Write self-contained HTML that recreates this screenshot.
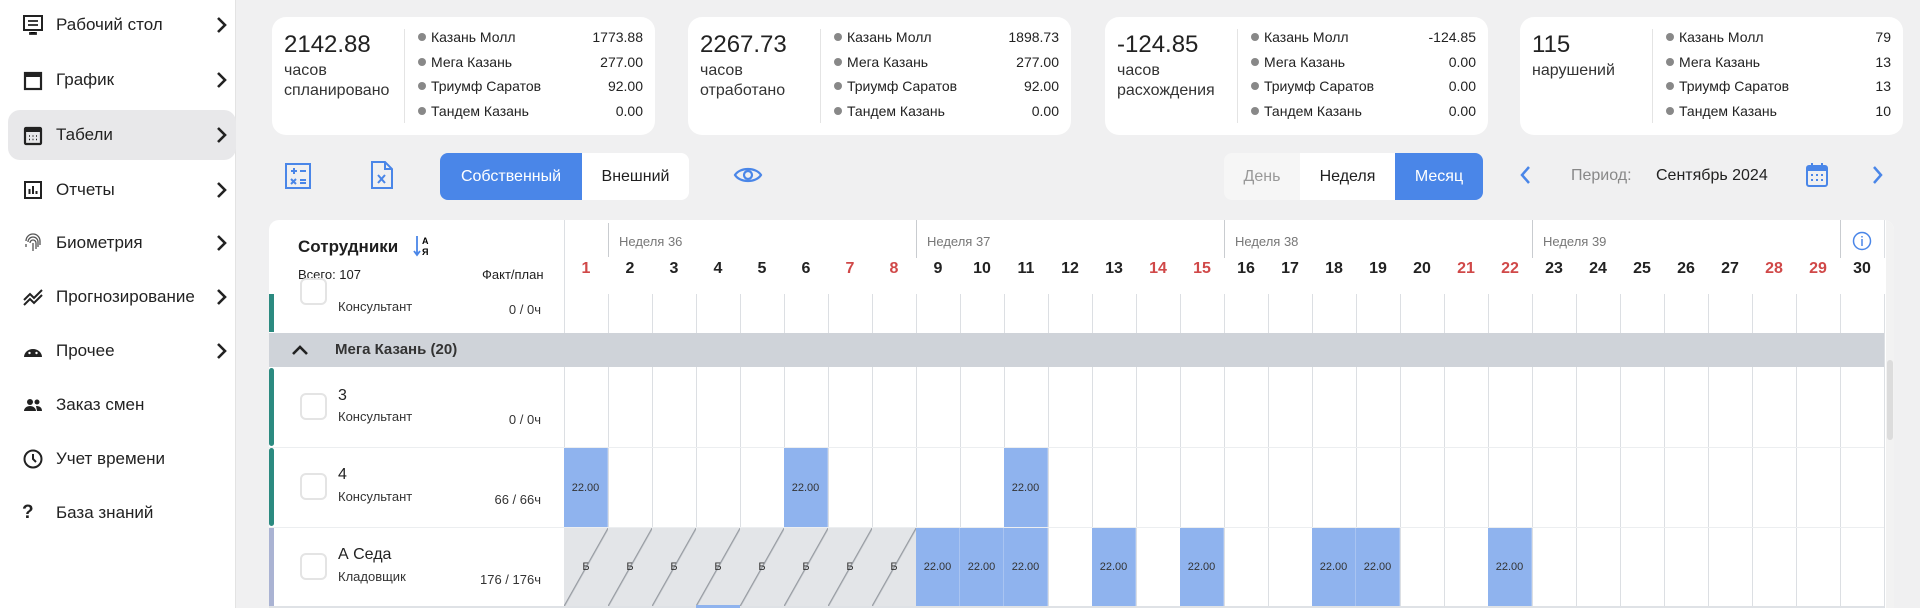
<!DOCTYPE html>
<html><head><meta charset="utf-8"><style>
*{box-sizing:border-box;margin:0;padding:0}
body{width:1920px;height:608px;overflow:hidden;background:#f0f0f1;font-family:"Liberation Sans",sans-serif;color:#1f1f1f;position:relative}
.a{position:absolute}
#side{left:0;top:0;width:236px;height:608px;background:#fff;border-right:1px solid #e3e3e3}
.it{position:absolute;left:8px;width:228px;height:48px;display:flex;align-items:center;font-size:17px;color:#222}
.it svg{position:absolute;left:14px}
.it span{position:absolute;left:48px}
.it svg.ch{position:absolute;left:208px}
.card{position:absolute;top:17px;height:118px;background:#fff;border-radius:14px;width:383px}
.big{position:absolute;left:12px;top:14px;font-size:24px;color:#222}
.sub{position:absolute;left:12px;top:44px;font-size:16px;line-height:20px;color:#333}
.dv{position:absolute;left:132px;top:12px;width:1px;height:94px;background:#e4e4e4}
.ls{position:absolute;left:146px;right:12px;top:12px}
.ls div{height:24.5px;font-size:14px;display:flex;justify-content:space-between;color:#222}
.ls div b{font-weight:normal}
.ls div b:before{content:"";display:inline-block;width:8px;height:8px;border-radius:50%;background:#888;margin-right:5px;vertical-align:1px}
.seg{position:absolute;top:153px;height:47px;font-size:16px;display:flex;align-items:center;justify-content:center}
#tbl{left:269px;top:220px;width:1625px;height:388px;background:#fff;border-radius:10px 10px 0 0;overflow:hidden}
.dn{position:absolute;top:40px;width:44px;text-align:center;font-size:16px;font-weight:bold;color:#222}
.r{color:#d04848}
.c{position:absolute;width:44px;font-size:11px;display:flex;align-items:center;justify-content:center;color:#333}
.bl{background:#8fb3ee;border-right:1px solid #a9c4f1}
.gr{background:#e3e5e8 linear-gradient(to bottom right,transparent 49%,#8a8f96 50%,transparent 52%)}
.cb{position:absolute;left:31px;width:27px;height:27px;border:2px solid #e4e4e4;border-radius:6px;background:#fff}
.nm{position:absolute;left:69px;font-size:16px;color:#222}
.rl{position:absolute;left:69px;font-size:13px;color:#333}
.fp{position:absolute;right:1353px;font-size:13px;color:#333;text-align:right;width:100px}
</style></head><body>

<div class="a" id="side">
 <div class="it" style="top:1px"><svg width="22" height="22" viewBox="0 0 22 22"><rect x="2" y="2" width="18" height="14" fill="none" stroke="#222" stroke-width="2"/><path d="M8 18v2h6v-2M6 7h10M6 11h10" stroke="#222" stroke-width="1.8"/></svg><span>Рабочий стол</span><svg class="ch" width="12" height="18" viewBox="0 0 12 18" fill="none" stroke="#222" stroke-width="2.6"><path d="M2 2l7 7-7 7"/></svg></div>
 <div class="it" style="top:56px"><svg width="22" height="22" viewBox="0 0 22 22"><rect x="3" y="4" width="16" height="16" fill="none" stroke="#222" stroke-width="2.2"/><rect x="3" y="4" width="16" height="4" fill="#222"/></svg><span>График</span><svg class="ch" width="12" height="18" viewBox="0 0 12 18" fill="none" stroke="#222" stroke-width="2.6"><path d="M2 2l7 7-7 7"/></svg></div>
 <div class="it" style="top:110px;background:#e8e8ea;border-radius:12px;height:50px"><svg width="22" height="22" viewBox="0 0 22 22"><rect x="3" y="4" width="16" height="16" rx="1" fill="none" stroke="#222" stroke-width="2.2"/><rect x="3" y="4" width="16" height="4" fill="#222"/><path d="M7 12h1M10.5 12h1M14 12h1M7 15.5h1M10.5 15.5h1M14 15.5h1" stroke="#222" stroke-width="1.6"/></svg><span>Табели</span><svg class="ch" width="12" height="18" viewBox="0 0 12 18" fill="none" stroke="#222" stroke-width="2.6"><path d="M2 2l7 7-7 7"/></svg></div>
 <div class="it" style="top:166px"><svg width="22" height="22" viewBox="0 0 22 22"><rect x="3" y="3" width="16" height="16" fill="none" stroke="#222" stroke-width="2"/><path d="M7.5 15v-5M11 15V7M14.5 15v-3" stroke="#222" stroke-width="2"/></svg><span>Отчеты</span><svg class="ch" width="12" height="18" viewBox="0 0 12 18" fill="none" stroke="#222" stroke-width="2.6"><path d="M2 2l7 7-7 7"/></svg></div>
 <div class="it" style="top:219px"><svg width="22" height="22" viewBox="0 0 22 22" fill="none" stroke="#555" stroke-width="1.3"><path d="M4 9a7 7 0 0 1 14 0v4M6 10a5 5 0 0 1 10 0v5M8 11a3 3 0 0 1 6 0v6M11 11v8M4 12v3"/></svg><span>Биометрия</span><svg class="ch" width="12" height="18" viewBox="0 0 12 18" fill="none" stroke="#222" stroke-width="2.6"><path d="M2 2l7 7-7 7"/></svg></div>
 <div class="it" style="top:273px"><svg width="22" height="22" viewBox="0 0 22 22" fill="none" stroke="#222" stroke-width="2"><path d="M2 14l6-6 4 4 8-8M2 19l6-6 4 4 8-8"/></svg><span>Прогнозирование</span><svg class="ch" width="12" height="18" viewBox="0 0 12 18" fill="none" stroke="#222" stroke-width="2.6"><path d="M2 2l7 7-7 7"/></svg></div>
 <div class="it" style="top:327px"><svg width="22" height="22" viewBox="0 0 22 22"><path d="M2 17a9 8 0 0 1 18 0z" fill="#222"/><circle cx="7.5" cy="13" r="1.2" fill="#fff"/><circle cx="14.5" cy="13" r="1.2" fill="#fff"/></svg><span>Прочее</span><svg class="ch" width="12" height="18" viewBox="0 0 12 18" fill="none" stroke="#222" stroke-width="2.6"><path d="M2 2l7 7-7 7"/></svg></div>
 <div class="it" style="top:381px"><svg width="22" height="22" viewBox="0 0 22 22" fill="#222"><circle cx="8" cy="8" r="3"/><circle cx="15" cy="8" r="2.5"/><path d="M2 17c0-3 3-5 6-5s6 2 6 5zM14 12c3 0 6 1 6 5h-5"/></svg><span>Заказ смен</span></div>
 <div class="it" style="top:435px"><svg width="22" height="22" viewBox="0 0 22 22" fill="none" stroke="#222" stroke-width="2"><circle cx="11" cy="11" r="8.5"/><path d="M11 6v5l3 3"/></svg><span>Учет времени</span></div>
 <div class="it" style="top:489px"><span style="left:14px;font-weight:bold;font-size:19px">?</span><span>База знаний</span></div>
</div>

<div class="card" style="left:272px"><div class="big">2142.88</div><div class="sub">часов<br>спланировано</div><div class="dv"></div><div class="ls"><div><b>Казань Молл</b>1773.88</div><div><b>Мега Казань</b>277.00</div><div><b>Триумф Саратов</b>92.00</div><div><b>Тандем Казань</b>0.00</div></div></div>
<div class="card" style="left:688px"><div class="big">2267.73</div><div class="sub">часов<br>отработано</div><div class="dv"></div><div class="ls"><div><b>Казань Молл</b>1898.73</div><div><b>Мега Казань</b>277.00</div><div><b>Триумф Саратов</b>92.00</div><div><b>Тандем Казань</b>0.00</div></div></div>
<div class="card" style="left:1105px"><div class="big">-124.85</div><div class="sub">часов<br>расхождения</div><div class="dv"></div><div class="ls"><div><b>Казань Молл</b>-124.85</div><div><b>Мега Казань</b>0.00</div><div><b>Триумф Саратов</b>0.00</div><div><b>Тандем Казань</b>0.00</div></div></div>
<div class="card" style="left:1520px"><div class="big">115</div><div class="sub">нарушений</div><div class="dv"></div><div class="ls"><div><b>Казань Молл</b>79</div><div><b>Мега Казань</b>13</div><div><b>Триумф Саратов</b>13</div><div><b>Тандем Казань</b>10</div></div></div>

<svg class="a" style="left:284px;top:162px" width="28" height="28" viewBox="0 0 28 28" fill="none" stroke="#4a86e8" stroke-width="2"><rect x="2" y="2" width="24" height="24"/><path d="M7 9h6M10 6v6M16 9h6M7 17l5 5M12 17l-5 5M16 18h6M16 21h6"/></svg>
<svg class="a" style="left:370px;top:160px" width="24" height="30" viewBox="0 0 24 30" fill="none" stroke="#4a86e8" stroke-width="2"><path d="M2 2h13l7 7v19H2zM15 2v7h7"/><path d="M8 15l7 8M15 15l-7 8"/></svg>
<div class="seg" style="left:440px;width:142px;background:#4a86e8;color:#fff;border-radius:8px 0 0 8px">Собственный</div>
<div class="seg" style="left:582px;width:107px;background:#fff;border-radius:0 8px 8px 0">Внешний</div>
<svg class="a" style="left:733px;top:164px" width="30" height="22" viewBox="0 0 30 22" fill="none" stroke="#4a86e8" stroke-width="2.2"><path d="M2 11C7 3 23 3 28 11C23 19 7 19 2 11z"/><circle cx="15" cy="11" r="4"/></svg>
<div class="seg" style="left:1224px;width:76px;background:#f6f6f6;color:#999;border-radius:8px 0 0 8px">День</div>
<div class="seg" style="left:1300px;width:95px;background:#fff">Неделя</div>
<div class="seg" style="left:1395px;width:88px;background:#4a86e8;color:#fff;border-radius:0 8px 8px 0">Месяц</div>
<svg class="a" style="left:1518px;top:165px" width="14" height="20" viewBox="0 0 14 20" fill="none" stroke="#4a86e8" stroke-width="2.5"><path d="M11 2L4 10l7 8"/></svg>
<div class="a" style="left:1571px;top:167px;font-size:16px;color:#888">Период:</div>
<div class="a" style="left:1656px;top:167px;font-size:16px;color:#222">Сентябрь 2024</div>
<svg class="a" style="left:1806px;top:163px" width="22" height="24" viewBox="0 0 22 24" fill="#4a86e8"><rect x="1" y="3" width="20" height="20" rx="2" fill="none" stroke="#4a86e8" stroke-width="2"/><rect x="1" y="3" width="20" height="5"/><rect x="5" y="0" width="2" height="5"/><rect x="15" y="0" width="2" height="5"/><path d="M5 11h2v2H5zM10 11h2v2h-2zM15 11h2v2h-2zM5 16h2v2H5zM10 16h2v2h-2zM15 16h2v2h-2z"/></svg>
<svg class="a" style="left:1871px;top:165px" width="14" height="20" viewBox="0 0 14 20" fill="none" stroke="#4a86e8" stroke-width="2.5"><path d="M3 2l7 8-7 8"/></svg>

<div class="a" id="tbl">
 <div class="a" style="left:295px;top:74px;width:1320px;height:314px;background:repeating-linear-gradient(to right,#dcdfe3 0 1px,transparent 1px 44px)"></div>
 <div class="a" style="left:295px;top:0;width:1px;height:74px;background:#dcdfe3"></div>
 <div class="a" style="left:1615px;top:74px;width:1px;height:314px;background:#dcdfe3"></div>
 <div class="a" style="left:29px;top:17px;font-size:17px;font-weight:bold">Сотрудники</div>
 <svg class="a" style="left:144px;top:14px" width="20" height="24" viewBox="0 0 20 24"><path d="M4 2v18M1 17l3 4 3-4" fill="none" stroke="#4a86e8" stroke-width="1.8"/><text x="9" y="10" font-size="9" font-weight="bold" font-family="Liberation Sans">А</text><text x="9" y="21" font-size="9" font-weight="bold" font-family="Liberation Sans">Я</text></svg>
 <div class="a" style="left:29px;top:47px;font-size:13px">Всего: 107</div>
 <div class="a" style="left:213px;top:47px;font-size:13px">Факт/план</div>
 <div class="a" style="left:339px;top:3px;width:1px;height:34px;background:#c9ccd0"></div>
 <div class="a" style="left:647px;top:0;width:1px;height:38px;background:#c9ccd0"></div>
 <div class="a" style="left:955px;top:0;width:1px;height:38px;background:#c9ccd0"></div>
 <div class="a" style="left:1263px;top:0;width:1px;height:38px;background:#c9ccd0"></div>
 <div class="a" style="left:1571px;top:0;width:1px;height:38px;background:#c9ccd0"></div>
 <div class="a" style="left:1615px;top:0;width:1px;height:38px;background:#dcdfe3"></div>
 <div class="a" style="left:350px;top:14px;font-size:13px;color:#777">Неделя 36</div>
 <div class="a" style="left:658px;top:14px;font-size:13px;color:#777">Неделя 37</div>
 <div class="a" style="left:966px;top:14px;font-size:13px;color:#777">Неделя 38</div>
 <div class="a" style="left:1274px;top:14px;font-size:13px;color:#777">Неделя 39</div>
 <svg class="a" style="left:1583px;top:11px" width="20" height="20" viewBox="0 0 20 20" fill="none" stroke="#4a86e8" stroke-width="1.5"><circle cx="10" cy="10" r="8.5"/><path d="M10 8v7M10 5v1.5"/></svg>
 <div class="dn r" style="left:295px">1</div><div class="dn" style="left:339px">2</div><div class="dn" style="left:383px">3</div><div class="dn" style="left:427px">4</div><div class="dn" style="left:471px">5</div><div class="dn" style="left:515px">6</div><div class="dn r" style="left:559px">7</div><div class="dn r" style="left:603px">8</div><div class="dn" style="left:647px">9</div><div class="dn" style="left:691px">10</div><div class="dn" style="left:735px">11</div><div class="dn" style="left:779px">12</div><div class="dn" style="left:823px">13</div><div class="dn r" style="left:867px">14</div><div class="dn r" style="left:911px">15</div><div class="dn" style="left:955px">16</div><div class="dn" style="left:999px">17</div><div class="dn" style="left:1043px">18</div><div class="dn" style="left:1087px">19</div><div class="dn" style="left:1131px">20</div><div class="dn r" style="left:1175px">21</div><div class="dn r" style="left:1219px">22</div><div class="dn" style="left:1263px">23</div><div class="dn" style="left:1307px">24</div><div class="dn" style="left:1351px">25</div><div class="dn" style="left:1395px">26</div><div class="dn" style="left:1439px">27</div><div class="dn r" style="left:1483px">28</div><div class="dn r" style="left:1527px">29</div><div class="dn" style="left:1571px">30</div>
 <div class="a" style="left:0;top:74px;width:5px;height:38px;background:#2b8a80"></div>
 <div class="cb" style="top:58px"></div>
 <div class="rl" style="top:79px">Консультант</div><div class="fp" style="top:82px">0 / 0ч</div>
 <div class="a" style="left:0;top:113px;width:1615px;height:34px;background:#cfd3d9"></div>
 <svg class="a" style="left:22px;top:124px" width="18" height="12" viewBox="0 0 18 12" fill="none" stroke="#222" stroke-width="2.6"><path d="M2 10l7-7 7 7"/></svg>
 <div class="a" style="left:66px;top:121px;font-size:15px;font-weight:bold;color:#333">Мега Казань (20)</div>
 <div class="a" style="left:0;top:148px;width:5px;height:78px;background:#2b8a80;border-radius:3px"></div>
 <div class="cb" style="top:173px"></div>
 <div class="nm" style="top:167px">3</div><div class="rl" style="top:189px">Консультант</div><div class="fp" style="top:192px">0 / 0ч</div>
 <div class="a" style="left:0;top:227px;width:1615px;height:1px;background:#eceef0"></div>
 <div class="a" style="left:0;top:228px;width:5px;height:78px;background:#2b8a80;border-radius:3px"></div>
 <div class="cb" style="top:253px"></div>
 <div class="nm" style="top:246px">4</div><div class="rl" style="top:269px">Консультант</div><div class="fp" style="top:272px">66 / 66ч</div>
 <div class="c bl" style="left:295px;top:228px;height:79px">22.00</div>
 <div class="c bl" style="left:515px;top:228px;height:79px">22.00</div>
 <div class="c bl" style="left:735px;top:228px;height:79px">22.00</div>
 <div class="a" style="left:0;top:307px;width:1615px;height:1px;background:#eceef0"></div>
 <div class="a" style="left:0;top:308px;width:5px;height:80px;background:#aab3d3"></div>
 <div class="cb" style="top:333px"></div>
 <div class="nm" style="top:326px">А Седа</div><div class="rl" style="top:349px">Кладовщик</div><div class="fp" style="top:352px">176 / 176ч</div>
 <div class="c gr" style="left:295px;top:308px;height:78px">Б</div><div class="c gr" style="left:339px;top:308px;height:78px">Б</div><div class="c gr" style="left:383px;top:308px;height:78px">Б</div><div class="c gr" style="left:427px;top:308px;height:78px">Б</div><div class="c gr" style="left:471px;top:308px;height:78px">Б</div><div class="c gr" style="left:515px;top:308px;height:78px">Б</div><div class="c gr" style="left:559px;top:308px;height:78px">Б</div><div class="c gr" style="left:603px;top:308px;height:78px">Б</div>
 <div class="c bl" style="left:647px;top:308px;height:78px">22.00</div><div class="c bl" style="left:691px;top:308px;height:78px">22.00</div><div class="c bl" style="left:735px;top:308px;height:78px">22.00</div><div class="c bl" style="left:823px;top:308px;height:78px">22.00</div><div class="c bl" style="left:911px;top:308px;height:78px">22.00</div><div class="c bl" style="left:1043px;top:308px;height:78px">22.00</div><div class="c bl" style="left:1087px;top:308px;height:78px">22.00</div><div class="c bl" style="left:1219px;top:308px;height:78px">22.00</div>
 <div class="a" style="left:0;top:386px;width:1615px;height:2px;background:#dfe2e6"></div>
 <div class="a" style="left:427px;top:385px;width:44px;height:3px;background:#8fb3ee"></div>
 <div class="a" style="left:1617px;top:0;width:8px;height:388px;background:#f2f2f2"></div>
 <div class="a" style="left:1618px;top:140px;width:6px;height:80px;background:#dcdcdc;border-radius:3px"></div>
</div>
</body></html>
